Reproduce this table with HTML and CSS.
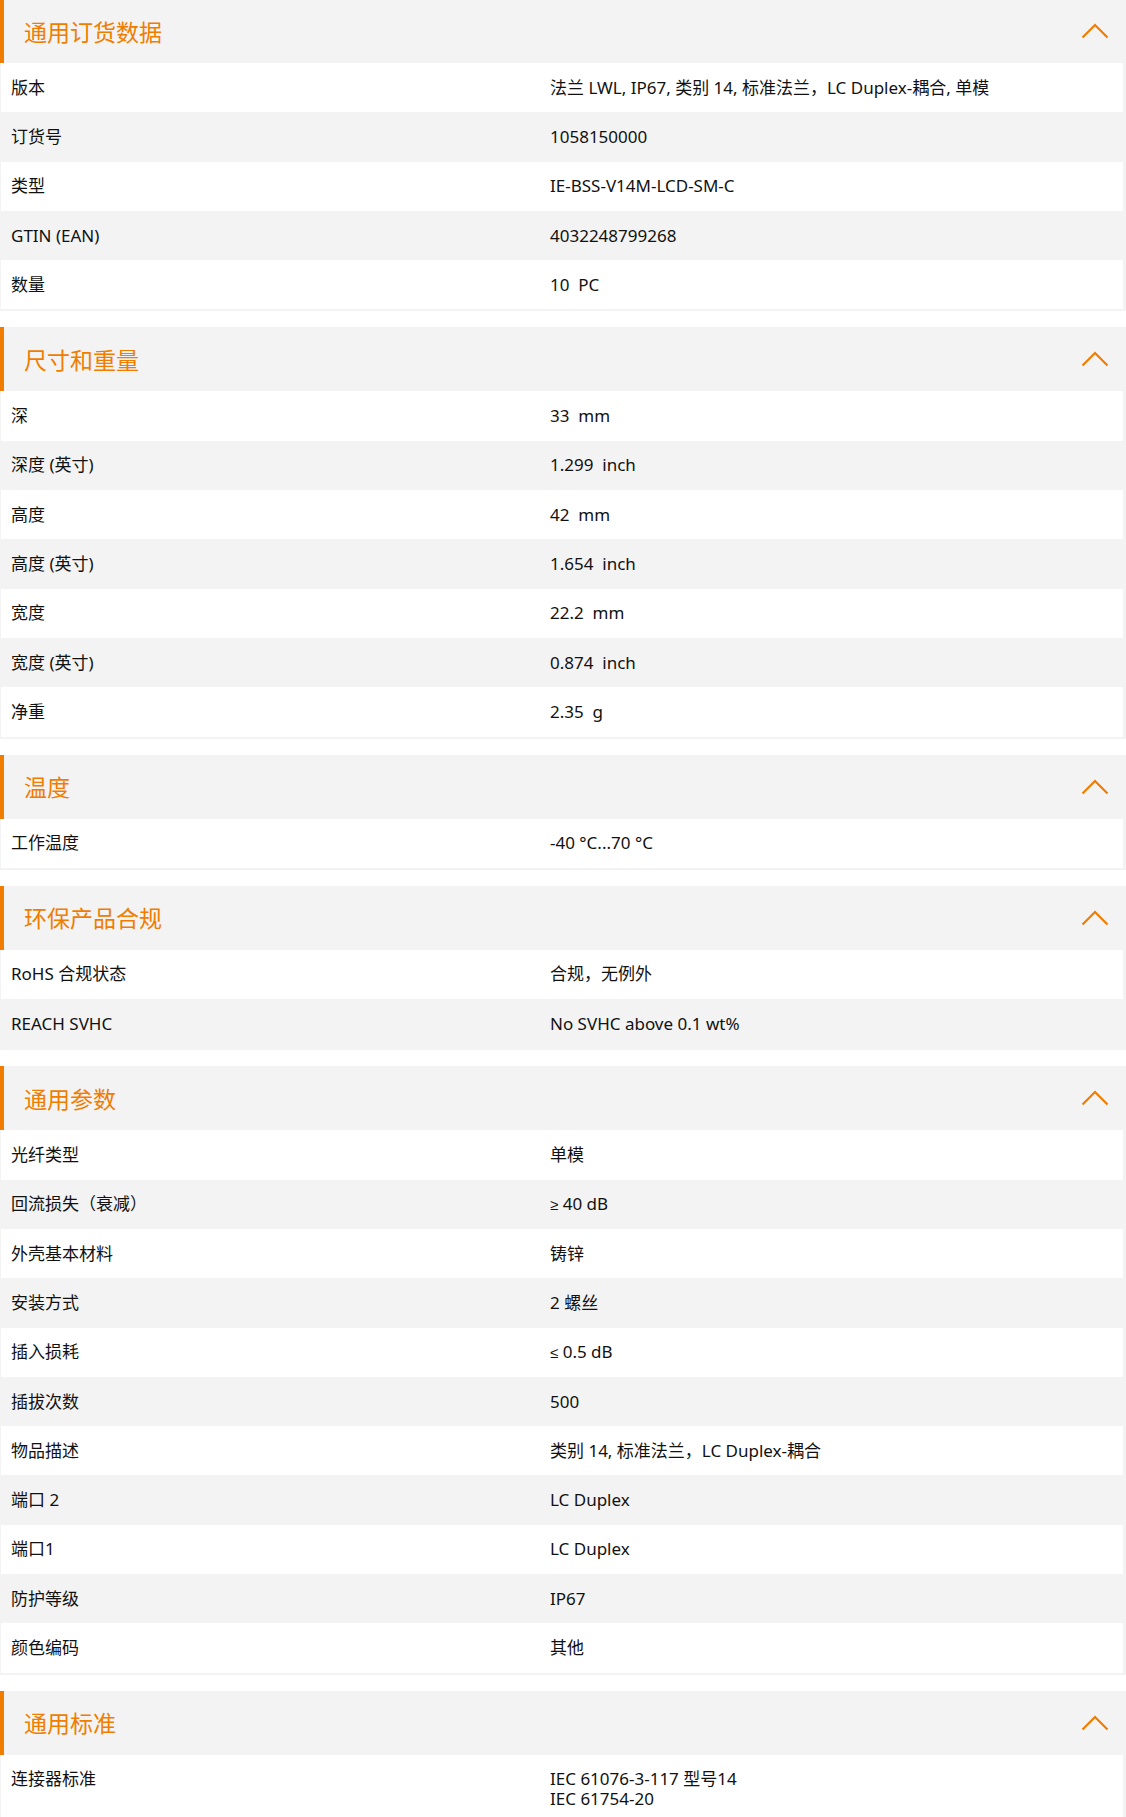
FILE: index.html
```html
<!DOCTYPE html>
<html lang="zh-CN">
<head>
<meta charset="utf-8">
<title>产品数据</title>
<link rel="stylesheet" href="styles.css">
</head>
<body>
<div class="page">

  <section class="sec">
    <div class="sec-head">
      <h2 class="sec-title">通用订货数据</h2>
      <svg class="chev" width="28" height="16" viewBox="0 0 28 16"><polyline points="1.5,14.5 14,2 26.5,14.5" fill="none" stroke="#f07d00" stroke-width="2.2"/></svg>
    </div>
    <div class="sec-body">
      <div class="row"><div class="lbl">版本</div><div class="val">法兰 LWL, IP67, 类别 14, 标准法兰，LC Duplex-耦合, 单模</div></div>
      <div class="row"><div class="lbl">订货号</div><div class="val">1058150000</div></div>
      <div class="row"><div class="lbl">类型</div><div class="val">IE-BSS-V14M-LCD-SM-C</div></div>
      <div class="row"><div class="lbl">GTIN (EAN)</div><div class="val">4032248799268</div></div>
      <div class="row"><div class="lbl">数量</div><div class="val">10&nbsp; PC</div></div>
    </div>
  </section>

  <section class="sec">
    <div class="sec-head">
      <h2 class="sec-title">尺寸和重量</h2>
      <svg class="chev" width="28" height="16" viewBox="0 0 28 16"><polyline points="1.5,14.5 14,2 26.5,14.5" fill="none" stroke="#f07d00" stroke-width="2.2"/></svg>
    </div>
    <div class="sec-body">
      <div class="row"><div class="lbl">深</div><div class="val">33&nbsp; mm</div></div>
      <div class="row"><div class="lbl">深度 (英寸)</div><div class="val">1.299&nbsp; inch</div></div>
      <div class="row"><div class="lbl">高度</div><div class="val">42&nbsp; mm</div></div>
      <div class="row"><div class="lbl">高度 (英寸)</div><div class="val">1.654&nbsp; inch</div></div>
      <div class="row"><div class="lbl">宽度</div><div class="val">22.2&nbsp; mm</div></div>
      <div class="row"><div class="lbl">宽度 (英寸)</div><div class="val">0.874&nbsp; inch</div></div>
      <div class="row"><div class="lbl">净重</div><div class="val">2.35&nbsp; g</div></div>
    </div>
  </section>

  <section class="sec">
    <div class="sec-head">
      <h2 class="sec-title">温度</h2>
      <svg class="chev" width="28" height="16" viewBox="0 0 28 16"><polyline points="1.5,14.5 14,2 26.5,14.5" fill="none" stroke="#f07d00" stroke-width="2.2"/></svg>
    </div>
    <div class="sec-body">
      <div class="row"><div class="lbl">工作温度</div><div class="val">-40 °C...70 °C</div></div>
    </div>
  </section>

  <section class="sec">
    <div class="sec-head">
      <h2 class="sec-title">环保产品合规</h2>
      <svg class="chev" width="28" height="16" viewBox="0 0 28 16"><polyline points="1.5,14.5 14,2 26.5,14.5" fill="none" stroke="#f07d00" stroke-width="2.2"/></svg>
    </div>
    <div class="sec-body">
      <div class="row"><div class="lbl">RoHS 合规状态</div><div class="val">合规，无例外</div></div>
      <div class="row"><div class="lbl">REACH SVHC</div><div class="val">No SVHC above 0.1 wt%</div></div>
    </div>
  </section>

  <section class="sec">
    <div class="sec-head">
      <h2 class="sec-title">通用参数</h2>
      <svg class="chev" width="28" height="16" viewBox="0 0 28 16"><polyline points="1.5,14.5 14,2 26.5,14.5" fill="none" stroke="#f07d00" stroke-width="2.2"/></svg>
    </div>
    <div class="sec-body">
      <div class="row"><div class="lbl">光纤类型</div><div class="val">单模</div></div>
      <div class="row"><div class="lbl">回流损失（衰减）</div><div class="val"><span class="sym">≥</span> 40 dB</div></div>
      <div class="row"><div class="lbl">外壳基本材料</div><div class="val">铸锌</div></div>
      <div class="row"><div class="lbl">安装方式</div><div class="val">2 螺丝</div></div>
      <div class="row"><div class="lbl">插入损耗</div><div class="val"><span class="sym">≤</span> 0.5 dB</div></div>
      <div class="row"><div class="lbl">插拔次数</div><div class="val">500</div></div>
      <div class="row"><div class="lbl">物品描述</div><div class="val">类别 14, 标准法兰，LC Duplex-耦合</div></div>
      <div class="row"><div class="lbl">端口 2</div><div class="val">LC Duplex</div></div>
      <div class="row"><div class="lbl">端口1</div><div class="val">LC Duplex</div></div>
      <div class="row"><div class="lbl">防护等级</div><div class="val">IP67</div></div>
      <div class="row"><div class="lbl">颜色编码</div><div class="val">其他</div></div>
    </div>
  </section>

  <section class="sec">
    <div class="sec-head">
      <h2 class="sec-title">通用标准</h2>
      <svg class="chev" width="28" height="16" viewBox="0 0 28 16"><polyline points="1.5,14.5 14,2 26.5,14.5" fill="none" stroke="#f07d00" stroke-width="2.2"/></svg>
    </div>
    <div class="sec-body">
      <div class="row"><div class="lbl">连接器标准</div><div class="val">IEC 61076-3-117 型号14<br>IEC 61754-20</div></div>
    </div>
  </section>

</div>
</body>
</html>
```

FILE: styles.css
```css
html, body {
  margin: 0;
  padding: 0;
  background: #fff;
}

body {
  font-family: "Noto Sans", "Noto Sans CJK SC", sans-serif;
  color: #111;
  font-size: 17px;
}

.page {
  width: 1126px;
  margin-top: -1px;
}

.sec {
  margin-bottom: 16px;
}

.sec-head {
  height: 64px;
  box-sizing: border-box;
  background: #f3f3f3;
  border-left: 4px solid #f07d00;
  display: flex;
  align-items: center;
  justify-content: space-between;
  padding: 0 17px 0 20px;
}

.sec-title {
  margin: 0;
  font-family: "Noto Sans CJK SC", "Noto Sans", sans-serif;
  font-weight: 400;
  font-size: 23px;
  color: #f07d00;
  line-height: 1;
}

.chev {
  display: block;
}

.sec-body {
  border-style: solid;
  border-color: #f3f3f3;
  border-width: 0 3px 2px 1px;
}

.row {
  display: grid;
  grid-template-columns: 539px 1fr;
  line-height: 20px;
  height: 49.3px;
}

.row:last-child {
  height: auto;
}

.row:nth-child(even) {
  background: #f3f3f3;
}

.lbl, .val {
  padding: 14.65px 10px;
}

.sym {
  font-family: "Liberation Sans", "DejaVu Sans", sans-serif;
  font-size: 15px;
  line-height: 1;
}
```
